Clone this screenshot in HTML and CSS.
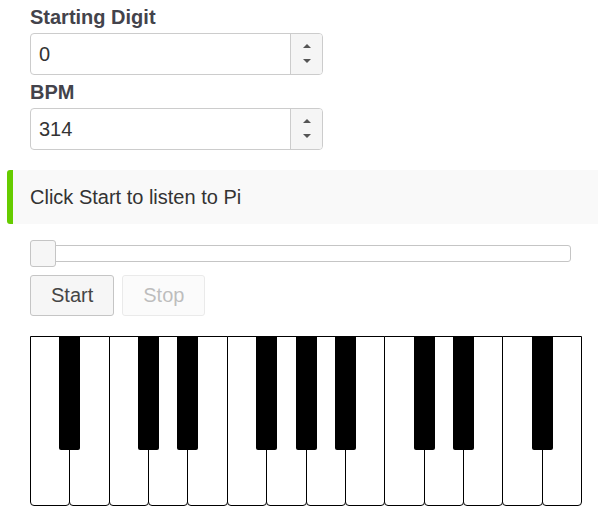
FILE: index.html
```html
<!DOCTYPE html>
<html>
<head>
<meta charset="utf-8">
<link rel="stylesheet" href="styles.css">
</head>
<body>
<div class="form">
  <label class="field-label">Starting Digit</label>
  <div class="spinner">
    <div class="spinner-value">0</div>
    <div class="spinner-buttons">
      <span class="arrow arrow-up"></span>
      <span class="arrow arrow-down"></span>
    </div>
  </div>
  <label class="field-label">BPM</label>
  <div class="spinner">
    <div class="spinner-value">314</div>
    <div class="spinner-buttons">
      <span class="arrow arrow-up"></span>
      <span class="arrow arrow-down"></span>
    </div>
  </div>
</div>
<div class="alert">Click Start to listen to Pi</div>
<div class="slider"><span class="slider-handle"></span></div>
<div class="buttons">
  <button class="btn">Start</button>
  <button class="btn btn-disabled">Stop</button>
</div>
<div class="piano">
  <div class="white"></div><div class="white"></div><div class="white"></div><div class="white"></div><div class="white"></div><div class="white"></div><div class="white"></div>
  <div class="white"></div><div class="white"></div><div class="white"></div><div class="white"></div><div class="white"></div><div class="white"></div><div class="white"></div>
  <div class="black" style="left:29.4px"></div>
  <div class="black" style="left:108.1px"></div>
  <div class="black" style="left:147.4px"></div>
  <div class="black" style="left:226.1px"></div>
  <div class="black" style="left:265.5px"></div>
  <div class="black" style="left:304.9px"></div>
  <div class="black" style="left:383.6px"></div>
  <div class="black" style="left:422.9px"></div>
  <div class="black" style="left:501.6px"></div>
</div>
</body>
</html>
```
FILE: styles.css
```css
* { box-sizing: border-box; }
body {
  margin: 0;
  font-family: "Liberation Sans", Arial, Helvetica, sans-serif;
  font-size: 20px;
  color: #333;
  background: #fff;
}
.form {
  padding: 5px 0 0 30px;
}
.field-label {
  display: block;
  font-weight: bold;
  line-height: 24px;
  color: #43434b;
  margin-bottom: 4px;
}
.spinner {
  display: flex;
  width: 293px;
  height: 42px;
  border: 1px solid #ccc;
  border-radius: 4px;
  overflow: hidden;
  margin-bottom: 5px;
  background: #fff;
}
.spinner-value {
  flex: 1;
  display: flex;
  align-items: center;
  padding-left: 8px;
  color: #333;
  line-height: 24px;
}
.spinner-buttons {
  width: 32px;
  border-left: 1px solid #ccc;
  background: #f5f5f5;
  display: flex;
  flex-direction: column;
  align-items: center;
  justify-content: space-around;
  padding: 5px 0 6px;
}
.arrow {
  width: 0;
  height: 0;
  border-left: 4px solid transparent;
  border-right: 4px solid transparent;
}
.arrow-up { border-bottom: 4px solid #555; }
.arrow-down { border-top: 4px solid #555; }
.alert {
  margin: 20px 0 0 7px;
  width: 591px;
  height: 54px;
  background: #f9f9f9;
  border-left: 6px solid #66cc00;
  border-radius: 3px 0 0 3px;
  padding: 15px 0 0 17px;
  line-height: 24px;
  color: #333;
}
.slider {
  position: relative;
  margin: 21px 0 0 30px;
  width: 541px;
  height: 17px;
  border: 1px solid #c5c5c5;
  border-radius: 3px;
  background: #fff;
}
.slider-handle {
  position: absolute;
  left: -1px;
  top: -6px;
  width: 26px;
  height: 27px;
  background: #f6f6f6;
  border: 1px solid #c5c5c5;
  border-radius: 3px;
}
.buttons {
  display: flex;
  gap: 8px;
  margin: 13px 0 0 30px;
}
.btn {
  font-family: inherit;
  font-size: 20px;
  line-height: normal;
  padding: 8px 20px;
  background: #f6f6f6;
  border: 1px solid #c5c5c5;
  border-radius: 3px;
  color: #454545;
  margin: 0;
}
.btn-disabled {
  opacity: 0.35;
}
.piano {
  position: relative;
  display: flex;
  margin: 20px 0 0 30px;
  width: 552px;
  height: 170px;
}
.white {
  flex: 1;
  height: 170px;
  border: 1px solid #000;
  border-radius: 0 0 4px 4px;
  background: #fff;
  margin-left: -1px;
}
.white:first-child { margin-left: 0; }
.black {
  position: absolute;
  top: 0;
  width: 21px;
  height: 114px;
  background: #000;
  border-radius: 0 0 2px 2px;
}
```
